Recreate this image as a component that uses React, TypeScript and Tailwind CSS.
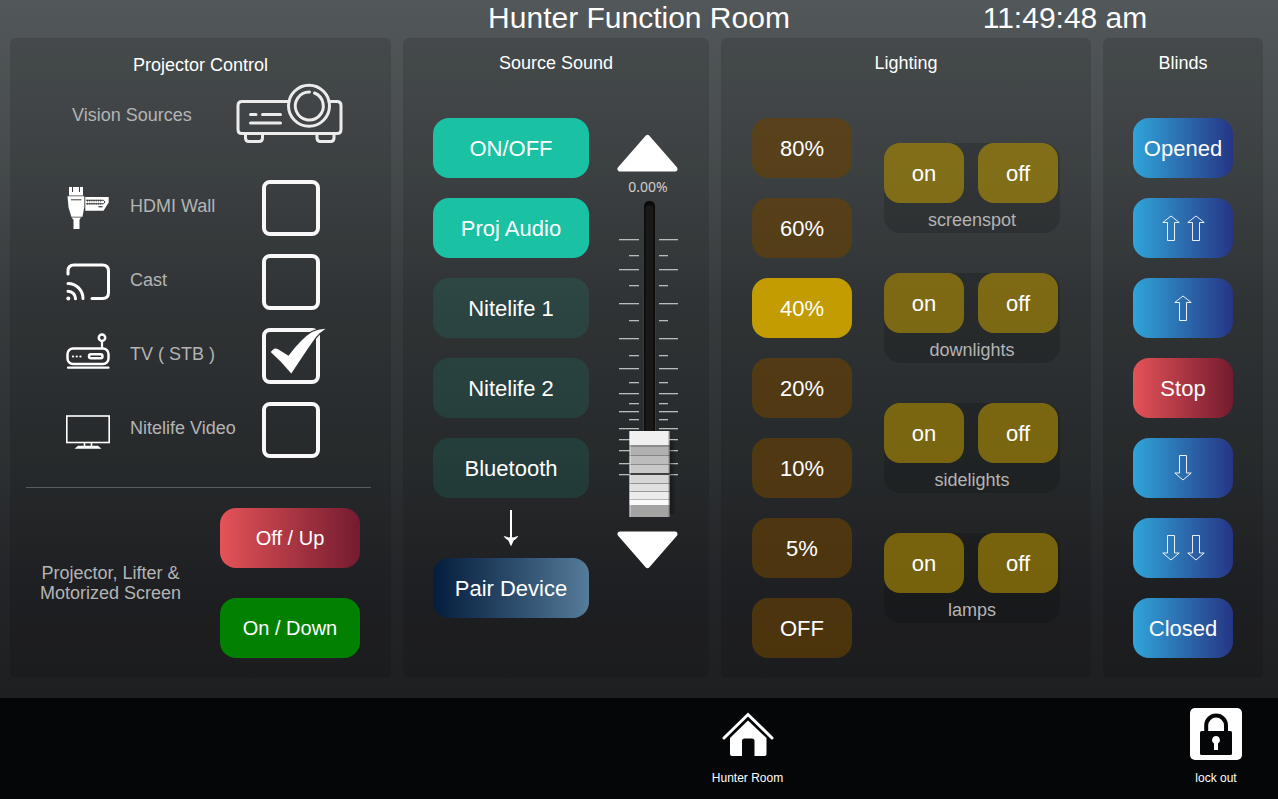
import { useState } from "react";
import type { ReactNode } from "react";

const SOUND_SOURCES = ["ON/OFF", "Proj Audio", "Nitelife 1", "Nitelife 2", "Bluetooth"];
const LIGHT_LEVELS = ["80%", "60%", "40%", "20%", "10%", "5%", "OFF"];
const LIGHT_GROUPS = ["screenspot", "downlights", "sidelights", "lamps"];

// y position and length of each mark beside the fader
const FADER_MARKS: [number, boolean][] = [
  [239, true],
  [255, false],
  [269, true],
  [285, false],
  [303, true],
  [320, false],
  [338, true],
  [355, false],
  [368, true],
  [382, false],
  [393, true],
  [403, false],
  [411, true],
  [419, false],
  [428, true],
  [439, true],
  [450, true],
  [463, true],
  [474, true],
];

const KNOB_BANDS: [number, number, string][] = [
  [431, 14, "#f0f0f0"],
  [445, 2, "#8c8c8c"],
  [447, 8, "#b0b0b0"],
  [455, 1, "#858585"],
  [456, 8, "#bcbcbc"],
  [464, 1, "#8d8d8d"],
  [465, 8, "#c8c8c8"],
  [473, 2, "#404040"],
  [475, 8, "#d6d6d6"],
  [483, 1, "#929292"],
  [484, 7, "#e0e0e0"],
  [491, 1, "#9a9a9a"],
  [492, 7, "#ececec"],
  [499, 1, "#b5b5b5"],
  [500, 5, "#fafafa"],
  [505, 12, "#a3a3a3"],
];

function ProjectorIcon() {
  return (
    <svg width="108" height="64" viewBox="235 82 108 64" fill="none" stroke="#ececec" strokeWidth="3" strokeLinecap="round" aria-hidden="true">
      <path d="M289 100.500H242q-4 0-4 4v24q0 4 4 4h95q4 0 4-4v-24q0-4-4-4h-8" />
      <path d="M245.500 133.500v3.500q0 3.500 3.500 3.500h10q3.500 0 3.500-3.500v-3.500M317 133.500v3.500q0 3.500 3.500 3.500h10q3.500 0 3.500-3.500v-3.500" />
      <circle cx="309" cy="104.800" r="20.500" />
      <path d="M309.500 91a14 14 0 1 0 5 1" />
      <path d="M250.500 113.500h5.500M262.500 113.500h18M250.500 122h30" />
    </svg>
  );
}

function HdmiIcon() {
  return (
    <svg width="44" height="44" viewBox="66 186 44 44" fill="#fff" aria-hidden="true">
      <path d="M69 187h3v5h1v-5h6v5h1v-5h3v8.500H69z" />
      <path d="M67.500 196.300h16.800v11l-1.800 9.500H71.300l-2.800-9.500z" />
      <path d="M71.500 217.500h9.500l-1.500 2.200v9.300h-6v-9.300z" />
      <path d="M85.300 197h23.400v5.500l-5.200 8.200H85.300z" />
      <path d="M71 199.800h10.500" stroke="#3a3d3f" strokeWidth="1" />
      <path d="M86 200.300h17.500l1.500 1.700-1.500 1.800H86" fill="none" stroke="#3a3d3f" strokeWidth="1" />
      <path d="M87 200.600h15.500M87 203.600h15.500" stroke="#3a3d3f" strokeWidth="1.600" strokeDasharray="1 1.200" />
      <path d="M98.500 206.700h4" stroke="#3a3d3f" strokeWidth="1.300" />
    </svg>
  );
}

function CastIcon() {
  return (
    <svg width="44" height="44" viewBox="66 258 44 44" fill="none" stroke="#fff" strokeWidth="3" strokeLinecap="round" aria-hidden="true">
      <path d="M68 272v-3q0-6 6-6h28.500q6 0 6 6v21.500q0 6-6 6H92" />
      <path d="M68 281.500a15 15 0 0 1 15 15M68 289.200a7.500 7.500 0 0 1 7.500 7.500" />
      <circle cx="68.300" cy="296.500" r="2" fill="#fff" stroke="none" />
    </svg>
  );
}

function SetTopBoxIcon() {
  return (
    <svg width="44" height="44" viewBox="66 333 44 44" className="overflow-visible" fill="none" stroke="#fff" strokeWidth="2.500" strokeLinecap="round" aria-hidden="true">
      <rect x="67.500" y="347.500" width="41" height="15.500" rx="5.500" />
      <rect x="89" y="353.300" width="13.500" height="4" rx="2" />
      <path d="M102 341v6M68 366.700h40.500" strokeWidth="2.200" />
      <circle cx="102" cy="336.700" r="3.200" />
      <path d="M73 355.500h.1M76.700 355.500h.1M80.400 355.500h.1" strokeWidth="2.200" />
    </svg>
  );
}

function TvIcon() {
  return (
    <svg width="44" height="44" viewBox="66 408 44 44" fill="none" stroke="#fff" strokeWidth="1.600" aria-hidden="true">
      <rect x="66.800" y="416" width="42.400" height="26.500" />
      <path d="M84.500 443v3M91.500 443v3" />
      <path d="M74.500 448.700l3.500-3h20l3.500 3z" fill="#fff" stroke="none" />
    </svg>
  );
}

const VISION_SOURCES: { name: string; icon: ReactNode }[] = [
  { name: "HDMI Wall", icon: <HdmiIcon /> },
  { name: "Cast", icon: <CastIcon /> },
  { name: "TV ( STB )", icon: <SetTopBoxIcon /> },
  { name: "Nitelife Video", icon: <TvIcon /> },
];

interface BlindArrowProps {
  down?: boolean;
}

function BlindArrow({ down = false }: BlindArrowProps) {
  return (
    <svg width="20" height="26" viewBox="0 0 20 26" fill="none" stroke="#fff" strokeWidth="1" strokeOpacity=".9" aria-hidden="true">
      {down ? (
        <path d="M6.500 .5h7v17.500h4.700L10 25l-8.200-7h4.700z" />
      ) : (
        <path d="M6.500 25.500h7V7.500h4.700L10 1 1.800 7.500h4.700z" />
      )}
    </svg>
  );
}

interface PanelProps {
  title: string;
  compact?: boolean;
  children: ReactNode;
}

function Panel({ title, compact = false, children }: PanelProps) {
  return (
    <section className="rounded-md bg-black/12 pb-5">
      <h2 className={compact ? "h-10 pt-[13px] text-center text-lg leading-7" : "h-20 pt-[13px] text-center text-lg leading-6"}>
        {title}
      </h2>
      {children}
    </section>
  );
}

function ProjectorPanel() {
  const [source, setSource] = useState("TV ( STB )");

  return (
    <Panel title="Projector Control" compact>
      <div className="pr-5 pl-4">
        <div className="flex h-[74px] items-center gap-[43px] pl-[46px]">
          <span className="text-lg text-[#b4b4b4]">Vision Sources</span>
          <ProjectorIcon />
        </div>

        <div className="mt-[19px]">
          {VISION_SOURCES.map(({ name, icon }) => (
            <label key={name} className="flex h-[74px] items-center gap-5 pl-10">
              {icon}
              <span className="w-28 pb-1 text-lg whitespace-nowrap text-[#b4b4b4]">{name}</span>
              <span className="relative h-14 w-[58px]">
                <input
                  type="checkbox"
                  checked={source === name}
                  onChange={() => setSource(name)}
                  className="block h-14 w-[58px] appearance-none rounded-lg border-4 border-[#f8f8f8]"
                />
                {source === name && (
                  <svg className="pointer-events-none absolute top-0 left-0 overflow-visible" width="64" height="56" viewBox="0 0 64 56" aria-hidden="true">
                    <path
                      d="M8.700 24L12 20.800Q14 19.800 16 21.300L26.500 27.700Q40 10 50 4 56 1 63.500 .7 57 5 54 9 46 20 29.300 45.500 20 34 8.700 24z"
                      fill="#fff"
                      stroke="#313335"
                      strokeWidth="2.500"
                      paintOrder="stroke"
                    />
                  </svg>
                )}
              </span>
            </label>
          ))}
        </div>

        <div className="mt-5 flex items-center justify-between border-t border-[#5a5d5f] pt-5 pr-[11px] pl-[14px]">
          <p className="text-center text-lg leading-5 text-[#b4b4b4]">
            Projector, Lifter &amp;
            <br />
            Motorized Screen
          </p>
          <div className="flex flex-col gap-[30px]">
            <button type="button" className="h-15 w-35 rounded-2xl bg-linear-to-r from-[#e55358] to-[#741b2f] text-xl">
              Off / Up
            </button>
            <button type="button" className="h-15 w-35 rounded-2xl bg-[#028002] text-xl">
              On / Down
            </button>
          </div>
        </div>
      </div>
    </Panel>
  );
}

function VolumeFader() {
  const [volume, setVolume] = useState(0);
  const step = (amount: number) => setVolume((v) => Math.min(100, Math.max(0, v + amount)));
  const lift = volume * 2.2;

  return (
    <div className="flex w-[62px] flex-col items-center pt-4">
      <button type="button" aria-label="Volume up" onClick={() => step(5)}>
        <svg width="62" height="38" viewBox="618 134 62 38" aria-hidden="true">
          <path d="M648.500 137.500L621 169h55z" fill="#fff" stroke="#fff" strokeWidth="5" strokeLinejoin="round" />
        </svg>
      </button>
      <output className="pt-1 font-['Noto_Sans',sans-serif] text-sm leading-[22px] text-[#cfcfcf]">{volume.toFixed(2)}%</output>
      <div className="relative">
        <svg width="62" height="324" viewBox="618 198 62 324" aria-hidden="true">
          <defs>
            <linearGradient id="knob-shadow">
              <stop offset="0" stopColor="#000" stopOpacity=".45" />
              <stop offset="1" stopColor="#000" stopOpacity="0" />
            </linearGradient>
          </defs>
          {FADER_MARKS.map(([y, long]) => (
            <g key={y} fill="#b9bcbd">
              <rect x={long ? 620 : 630} y={y} width={long ? 20 : 10} height="1.300" />
              <rect x="660" y={y} width={long ? 19 : 9} height="1.300" />
            </g>
          ))}
          <rect x="644" y="200" width="13" height="300" rx="6" fill="#3b3b3b" />
          <rect x="645" y="201" width="11" height="300" rx="5" fill="#0b0b0b" />
          <rect x="646.500" y="205" width="8" height="300" rx="4" fill="#191919" />
          <g transform={`translate(0 ${-lift})`}>
            <rect x="670" y="440" width="7" height="74" rx="3" fill="url(#knob-shadow)" />
            {KNOB_BANDS.map(([y, h, fill]) => (
              <rect key={y} x="630.500" y={y} width="40" height={h} fill={fill} />
            ))}
            <rect x="630.500" y="431" width="1" height="86" fill="#fff" opacity=".6" />
            <rect x="669.500" y="431" width="1" height="86" fill="#666" opacity=".6" />
          </g>
        </svg>
        <input
          type="range"
          aria-label="Volume"
          min={0}
          max={100}
          value={volume}
          onChange={(e) => setVolume(Number(e.target.value))}
          className="absolute inset-0 h-full w-full opacity-0 [direction:rtl] [writing-mode:vertical-lr]"
        />
      </div>
      <button type="button" aria-label="Volume down" className="mt-2" onClick={() => step(-5)}>
        <svg width="62" height="40" viewBox="618 530 62 40" aria-hidden="true">
          <path d="M648.500 565.500L621 534h55z" fill="#fff" stroke="#fff" strokeWidth="5" strokeLinejoin="round" />
        </svg>
      </button>
    </div>
  );
}

function SoundPanel() {
  const [active, setActive] = useState(["ON/OFF", "Proj Audio"]);

  const toggle = (name: string) => {
    setActive((list) => (list.includes(name) ? list.filter((n) => n !== name) : [...list, name]));
  };

  return (
    <Panel title="Source Sound">
      <div className="flex justify-center gap-7">
        <div className="flex flex-col">
          <div className="flex flex-col gap-5">
            {SOUND_SOURCES.map((name) => (
              <button
                key={name}
                type="button"
                onClick={() => toggle(name)}
                className={
                  active.includes(name)
                    ? "h-15 w-39 rounded-2xl bg-[#1bc1a3] text-[22px]"
                    : "h-15 w-39 rounded-2xl bg-[#1bc1a3]/13 text-[22px]"
                }
              >
                {name}
              </button>
            ))}
          </div>
          <div className="flex h-15 items-center justify-center">
            <svg width="16" height="38" viewBox="504 509 16 38" fill="none" stroke="#fff" strokeWidth="2" aria-hidden="true">
              <path d="M512 510v34" />
              <path d="M505.300 536.500q1.500 2.500 4.200 3.500l2.500 5.500 2.500-5.500q2.700-1 4.200-3.500l-4.200 1.300H509.500z" fill="#fff" strokeWidth=".8" />
            </svg>
          </div>
          <button type="button" className="h-15 w-39 rounded-2xl bg-linear-to-r from-[#061d3d] to-[#557c99] text-[22px]">
            Pair Device
          </button>
        </div>
        <VolumeFader />
      </div>
    </Panel>
  );
}

function LightingPanel() {
  const [level, setLevel] = useState("40%");

  return (
    <Panel title="Lighting">
      <div className="flex justify-center gap-8">
        <div className="flex flex-col gap-5">
          {LIGHT_LEVELS.map((name) => (
            <button
              key={name}
              type="button"
              onClick={() => setLevel(name)}
              className={
                level === name
                  ? "h-15 w-25 rounded-2xl bg-[#c29c00] text-[22px]"
                  : "h-15 w-25 rounded-2xl bg-[#654004]/65 text-[22px]"
              }
            >
              {name}
            </button>
          ))}
        </div>
        <div className="flex flex-col gap-10 pt-[25px]">
          {LIGHT_GROUPS.map((name) => (
            <div key={name} role="group" aria-label={name} className="h-[90px] w-44 rounded-2xl bg-black/15">
              <div className="flex gap-[14px]">
                <button type="button" className="h-15 w-20 rounded-2xl bg-[#c29c00]/55 text-[22px]">
                  on
                </button>
                <button type="button" className="h-15 w-20 rounded-2xl bg-[#c29c00]/55 text-[22px]">
                  off
                </button>
              </div>
              <p className="pt-1 text-center text-lg leading-[26px] text-[#b4b4b4]">{name}</p>
            </div>
          ))}
        </div>
      </div>
    </Panel>
  );
}

function BlindsPanel() {
  const blue = "flex h-15 w-25 items-center justify-center gap-[5px] rounded-2xl bg-linear-to-r from-[#2fa5d9] to-[#253585] text-[22px]";

  return (
    <Panel title="Blinds">
      <div className="flex flex-col items-center gap-5">
        <button type="button" className={blue}>
          Opened
        </button>
        <button type="button" className={blue} aria-label="Raise fast">
          <BlindArrow />
          <BlindArrow />
        </button>
        <button type="button" className={blue} aria-label="Raise">
          <BlindArrow />
        </button>
        <button type="button" className="h-15 w-25 rounded-2xl bg-linear-to-r from-[#e55358] to-[#741b2f] text-[22px]">
          Stop
        </button>
        <button type="button" className={blue} aria-label="Lower">
          <BlindArrow down />
        </button>
        <button type="button" className={blue} aria-label="Lower fast">
          <BlindArrow down />
          <BlindArrow down />
        </button>
        <button type="button" className={blue}>
          Closed
        </button>
      </div>
    </Panel>
  );
}

function Footer() {
  return (
    <footer className="grid grow grid-cols-6 bg-[#050608] pt-[10px] pb-3 text-xs">
      <a href="#hunter-room" className="col-start-4 ml-1 flex flex-col items-center gap-2 justify-self-center">
        <svg width="52" height="52" viewBox="721 708 52 52" aria-hidden="true">
          <path d="M723 738L747 714.500 771 738" fill="none" stroke="#fff" strokeWidth="3" strokeLinecap="round" />
          <path d="M747 720.500L765.500 738v16q0 2-2 2H753.500V741q0-2.500-2.500-2.500h-7.500q-2.500 0-2.500 2.500v15H731q-2 0-2-2V738z" fill="#fff" />
        </svg>
        <span className="leading-5">Hunter Room</span>
      </a>
      <button type="button" className="col-start-6 mr-9 flex flex-col items-center gap-2 self-start justify-self-end">
        <svg width="52" height="52" viewBox="0 0 52 52" aria-hidden="true">
          <rect width="52" height="52" rx="5" fill="#fff" />
          <path d="M16.200 25V17.500a9.900 9.900 0 0 1 19.800 0V25" fill="none" stroke="#050608" strokeWidth="4" />
          <rect x="10" y="23" width="32" height="24" rx="1.500" fill="#050608" />
          <path d="M26 28a4 4 0 0 0-2 7.400V42h4v-6.600a4 4 0 0 0-2-7.400z" fill="#fff" />
        </svg>
        <span className="leading-5">lock out</span>
      </button>
    </footer>
  );
}

export default function App() {
  return (
    <div className="flex min-h-screen flex-col bg-[#1f2022] font-['Liberation_Sans',Arial,sans-serif] text-white">
      <div className="bg-[linear-gradient(#525759_0%,#464b4d_22%,#363a3c_45%,#2b2f31_68%,#242528_82%,#1e1f21_100%)]">
        <header className="grid h-[38px] grid-cols-3 text-center text-3xl">
          <h1 className="col-start-2">Hunter Function Room</h1>
          <time>11:49:48 am</time>
        </header>
        <main className="grid grid-cols-[381fr_306fr_370fr_160fr] gap-3 pr-[15px] pb-5 pl-[10px]">
          <ProjectorPanel />
          <SoundPanel />
          <LightingPanel />
          <BlindsPanel />
        </main>
      </div>
      <Footer />
    </div>
  );
}
